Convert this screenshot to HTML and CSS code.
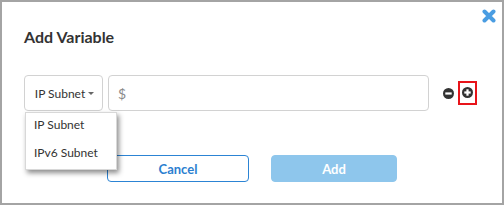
FILE: index.html
```html
<!DOCTYPE html>
<html>
<head>
<meta charset="utf-8">
<link rel="stylesheet" href="styles.css">
</head>
<body>
<div class="modal">
  <div class="header">
    <h1 class="title">Add Variable</h1>
    <button class="close" aria-label="Close">
      <svg width="14" height="14" viewBox="0 0 14 14"><path d="M2.5 2.5 L11.5 11.5 M11.5 2.5 L2.5 11.5" stroke="#4a9de2" stroke-width="4" stroke-linecap="round"/></svg>
    </button>
  </div>
  <div class="row">
    <div class="select-wrap">
      <button class="select">IP Subnet <span class="caret"></span></button>
      <ul class="menu">
        <li class="item">IP Subnet</li>
        <li class="item">IPv6 Subnet</li>
      </ul>
    </div>
    <div class="input"><span class="prefix">$</span></div>
    <div class="icons">
      <span class="icon">
        <svg width="11" height="11" viewBox="0 0 11 11"><circle cx="5.5" cy="5.5" r="5.5" fill="#333"/><rect x="2.3" y="4.4" width="6.4" height="2.2" fill="#fff"/></svg>
      </span>
      <span class="icon hl">
        <svg width="11" height="11" viewBox="0 0 11 11"><circle cx="5.5" cy="5.5" r="5.5" fill="#333"/><rect x="2.3" y="4.4" width="6.4" height="2.2" fill="#fff"/><rect x="4.4" y="2.3" width="2.2" height="6.4" fill="#fff"/></svg>
      </span>
    </div>
  </div>
  <div class="footer">
    <button class="btn cancel">Cancel</button>
    <button class="btn add">Add</button>
  </div>
</div>
</body>
</html>
```
FILE: styles.css
```css
* { box-sizing: border-box; }
html, body { margin: 0; padding: 0; background: #fff; }
body { font-family: Lato, "Open Sans", sans-serif; color: #333; }
.modal {
  width: 504px;
  height: 205px;
  border: 2px solid #a4a4a4;
  background: #fff;
  padding: 0 6px 0 22px;
}
.header {
  display: flex;
  justify-content: space-between;
  align-items: flex-start;
}
.title {
  margin: 25px 0 0 0;
  font-size: 16px;
  line-height: 20px;
  font-weight: 700;
  color: #333;
}
.close {
  margin-top: 7px;
  padding: 0;
  border: 0;
  background: none;
  width: 14px;
  height: 14px;
  display: block;
}
.close svg { display: block; }
.row {
  display: flex;
  align-items: center;
  margin-top: 28px;
}
.select-wrap { position: relative; }
.select {
  width: 79px;
  height: 36px;
  border: 1px solid #d2d2d2;
  border-radius: 4px;
  background: #fff;
  font-family: Lato, sans-serif;
  font-size: 12px;
  color: #333;
  padding: 0 0 0 2px;
  display: flex;
  align-items: center;
  justify-content: center;
  gap: 3px;
}
.caret {
  width: 0;
  height: 0;
  border-left: 3.5px solid transparent;
  border-right: 3.5px solid transparent;
  border-top: 3.5px solid #666;
  margin-top: 1px;
}
.menu {
  position: absolute;
  left: 1px;
  top: 37px;
  width: 92px;
  margin: 0;
  padding: 0;
  list-style: none;
  background: #fff;
  border: 1px solid #d8d8d8;
  box-shadow: 2px 3px 5px rgba(0, 0, 0, 0.45);
  z-index: 2;
}
.item {
  font-size: 12px;
  line-height: 14px;
  padding: 5px 8px 9px;
  color: #333;
}
.input {
  width: 321px;
  height: 36px;
  margin-left: 5px;
  border: 1px solid #d2d2d2;
  border-radius: 4px;
  display: flex;
  align-items: center;
  padding-left: 9px;
}
.prefix { color: #8a8a8a; font-size: 14px; }
.icons {
  display: flex;
  align-items: center;
  margin-left: 14px;
  gap: 4px;
}
.icon { display: block; }
.icon svg { display: block; }
.hl {
  border: 2px solid #e8141a;
  padding: 4px 2px 5px 2px;
}
.footer {
  display: flex;
  justify-content: center;
  gap: 22px;
  margin-top: 44px;
  padding-right: 16px;
}
.btn {
  height: 27px;
  border-radius: 4px;
  font-family: Lato, sans-serif;
  font-weight: 700;
  font-size: 13px;
  padding: 0;
}
.cancel {
  width: 142px;
  background: #fff;
  border: 1px solid #2c84d4;
  color: #2c7fd0;
}
.add {
  width: 126px;
  background: #8ec6ec;
  border: 1px solid #8ec6ec;
  color: #fff;
}
```
